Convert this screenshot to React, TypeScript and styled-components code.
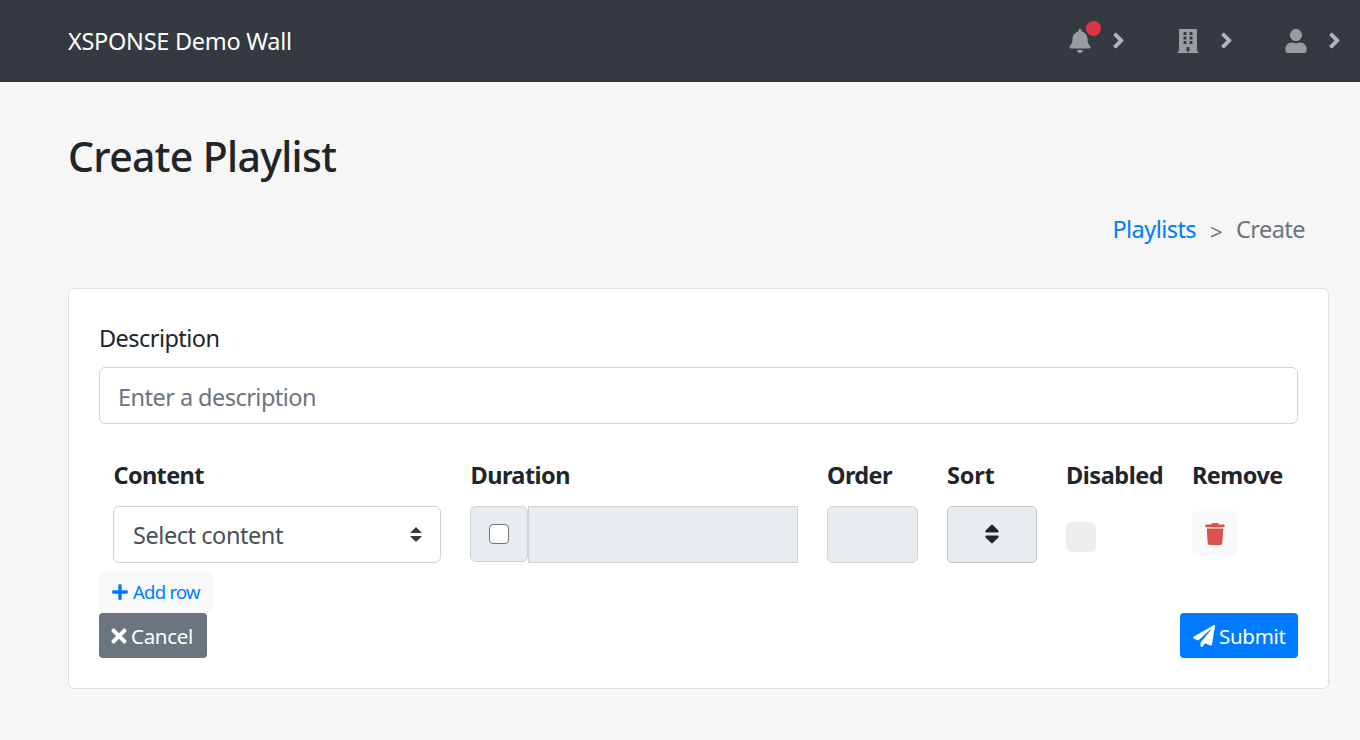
import React from "react";
import styled, { createGlobalStyle } from "styled-components";
import {
  FaAngleRight,
  FaBell,
  FaBuilding,
  FaPaperPlane,
  FaPlus,
  FaSort,
  FaTimes,
  FaTrash,
  FaUser,
} from "react-icons/fa";

const GlobalStyle = createGlobalStyle`
  *, *::before, *::after { box-sizing: border-box; }
  body {
    margin: 0;
    background: #f6f6f6;
    color: #212529;
    font-family: "Segoe UI", "Noto Sans", "Open Sans", sans-serif;
    font-size: 23.5px;
    line-height: 36px;
  }
  svg { display: block; flex: none; }
`;

const Page = styled.div`
  min-height: 740px;
  overflow: hidden;
`;

const Navbar = styled.header`
  display: flex;
  align-items: center;
  justify-content: space-between;
  height: 82px;
  padding: 0 19px 0 68px;
  background: #343a40;
`;

const Brand = styled.span`
  color: #fff;
  letter-spacing: -0.28px;
`;

const NavMenu = styled.nav`
  display: flex;
  gap: 51px;
`;

const NavItem = styled.a`
  position: relative;
  display: flex;
  align-items: center;
  justify-content: space-between;
  width: 57px;
  color: #9a9da0;
`;

const NavArrow = styled(FaAngleRight)`
  margin: 0 -6px 2px 0;
  color: #adb5bd;
`;

const NotificationDot = styled.span`
  position: absolute;
  top: -7px;
  left: 18px;
  width: 15px;
  height: 15px;
  border-radius: 50%;
  background: #dc3545;
`;

const Main = styled.main`
  padding: 49px 31px 0 68px;
`;

const Title = styled.h1`
  margin: 0;
  font-size: 41px;
  font-weight: 500;
  line-height: 50px;
  letter-spacing: -0.68px;
`;

const Breadcrumb = styled.nav`
  display: flex;
  justify-content: flex-end;
  margin-top: 30px;
  padding-right: 24px;
  color: #6c757d;
  letter-spacing: -0.55px;
`;

const Crumb = styled.a`
  color: #007bff;
`;

const Separator = styled.span`
  width: 40px;
  padding-top: 2px;
  text-align: center;
  font-size: 22px;
`;

const Card = styled.section`
  margin-top: 39px;
  height: 401px;
  padding: 31px 30px 0;
  border: 1px solid #dfdfdf;
  border-radius: 6px;
  background: #fff;
`;

const Label = styled.label`
  display: block;
  margin-bottom: 11px;
  letter-spacing: -0.55px;
`;

const TextInput = styled.input`
  display: block;
  width: 100%;
  height: 57px;
  padding: 2px 18px 0 18px;
  border: 1px solid #ced4da;
  border-radius: 6px;
  background: #fff;
  font: inherit;
  letter-spacing: -0.54px;
  &::placeholder { color: #6c757d; opacity: 1; }
`;

const Grid = styled.div`
  display: grid;
  grid-template-columns: 328px 328px 91px 90px 97px 91px;
  column-gap: 29px;
  margin-top: 33px;
  padding-left: 14px;
`;

const HeadCell = styled.div<{ $tracking: number; $indent: number }>`
  height: 49px;
  padding-left: ${(p) => p.$indent}px;
  font-weight: 700;
  letter-spacing: ${(p) => p.$tracking}px;
  white-space: nowrap;
`;

const Select = styled.div`
  display: flex;
  align-items: center;
  justify-content: space-between;
  height: 57px;
  padding: 0 18px 0 19px;
  border: 1px solid #ced4da;
  border-radius: 6px;
  color: #495057;
  letter-spacing: -0.44px;
`;

const InputGroup = styled.div`
  display: flex;
`;

const Addon = styled.label`
  display: flex;
  align-items: center;
  justify-content: center;
  width: 58px;
  height: 56px;
  border: 1px solid #ced4da;
  border-radius: 6px;
  background: #e9ecef;
`;

const Checkbox = styled.input`
  appearance: none;
  width: 20px;
  height: 20px;
  margin: 0;
  border: 1.5px solid #767676;
  border-radius: 4px;
  background: #fff;
`;

const DisabledBox = styled.div<{ $rounded?: boolean }>`
  flex: 1;
  height: 57px;
  border: 1px solid #ced4da;
  border-radius: ${(p) => (p.$rounded ? 6 : 0)}px;
  background: #e9ecef;
`;

const SortButton = styled.button`
  display: flex;
  align-items: center;
  justify-content: center;
  height: 57px;
  padding: 0 0 2px;
  border: 1px solid #c3c6c9;
  border-radius: 5px;
  background: #e9ecef;
  color: #212529;
`;

const DisabledToggle = styled.span`
  width: 30px;
  height: 30px;
  margin-top: 16px;
  border-radius: 6px;
  background: #eee;
`;

const RemoveButton = styled.button`
  display: flex;
  align-items: center;
  justify-content: center;
  width: 45px;
  height: 45px;
  margin-top: 5px;
  padding: 1px 0 0;
  border: 0;
  border-radius: 5px;
  background: #f8f9fa;
  color: #d9534f;
`;

const AddButton = styled.button`
  display: flex;
  align-items: center;
  gap: 5px;
  width: 114px;
  height: 41px;
  margin-top: 9px;
  padding: 0 0 1px 13px;
  border: 0;
  border-radius: 5px;
  background: #f8f9fa;
  color: #007bff;
  font: inherit;
  font-size: 18.5px;
  letter-spacing: -0.75px;
  white-space: nowrap;
`;

const PlusIcon = styled(FaPlus)`
  width: 16px;
  height: 18px;
`;

const CloseIcon = styled(FaTimes)`
  width: 16px;
  height: 22px;
`;

const Actions = styled.div`
  display: flex;
  justify-content: space-between;
`;

const ActionButton = styled.button<{ $primary?: boolean }>`
  display: flex;
  align-items: center;
  gap: 4px;
  width: ${(p) => (p.$primary ? 118 : 108)}px;
  height: 45px;
  padding: 0 0 0 ${(p) => (p.$primary ? 13 : 12)}px;
  border: 0;
  border-radius: 4px;
  background: ${(p) => (p.$primary ? "#007bff" : "#6c757d")};
  color: #fff;
  font: inherit;
  font-size: 20.5px;
  letter-spacing: -0.3px;
`;

const columns = [
  { name: "Content", tracking: -0.65, indent: 0.5 },
  { name: "Duration", tracking: -0.55, indent: 0.5 },
  { name: "Order", tracking: -0.63, indent: 0 },
  { name: "Sort", tracking: -0.2, indent: 0 },
  { name: "Disabled", tracking: -0.45, indent: 0 },
  { name: "Remove", tracking: -0.55, indent: 0 },
];

export default function App() {
  return (
    <Page>
      <GlobalStyle />
      <Navbar>
        <Brand>XSPONSE Demo Wall</Brand>
        <NavMenu>
          <NavItem>
            <FaBell size={24} />
            <NotificationDot />
            <NavArrow size={25} />
          </NavItem>
          <NavItem>
            <FaBuilding size={24} />
            <NavArrow size={25} />
          </NavItem>
          <NavItem>
            <FaUser size={24} />
            <NavArrow size={25} />
          </NavItem>
        </NavMenu>
      </Navbar>
      <Main>
        <Title>Create Playlist</Title>
        <Breadcrumb>
          <Crumb>Playlists</Crumb>
          <Separator>&gt;</Separator>
          <span>Create</span>
        </Breadcrumb>
        <Card>
          <Label htmlFor="description">Description</Label>
          <TextInput id="description" placeholder="Enter a description" />
          <Grid>
            {columns.map((c) => (
              <HeadCell key={c.name} $tracking={c.tracking} $indent={c.indent}>
                {c.name}
              </HeadCell>
            ))}
            <Select>
              Select content
              <svg width="12" height="15" viewBox="0 0 12 15" fill="#343a40">
                <path d="M0 6 6 0l6 6zM0 9h12l-6 6z" />
              </svg>
            </Select>
            <InputGroup>
              <Addon>
                <Checkbox type="checkbox" />
              </Addon>
              <DisabledBox />
            </InputGroup>
            <DisabledBox $rounded />
            <SortButton>
              <FaSort size={24} />
            </SortButton>
            <DisabledToggle />
            <RemoveButton>
              <FaTrash size={22} />
            </RemoveButton>
          </Grid>
          <AddButton>
            <PlusIcon />
            Add row
          </AddButton>
          <Actions>
            <ActionButton>
              <CloseIcon />
              Cancel
            </ActionButton>
            <ActionButton $primary>
              <FaPaperPlane size={22} />
              Submit
            </ActionButton>
          </Actions>
        </Card>
      </Main>
    </Page>
  );
}
